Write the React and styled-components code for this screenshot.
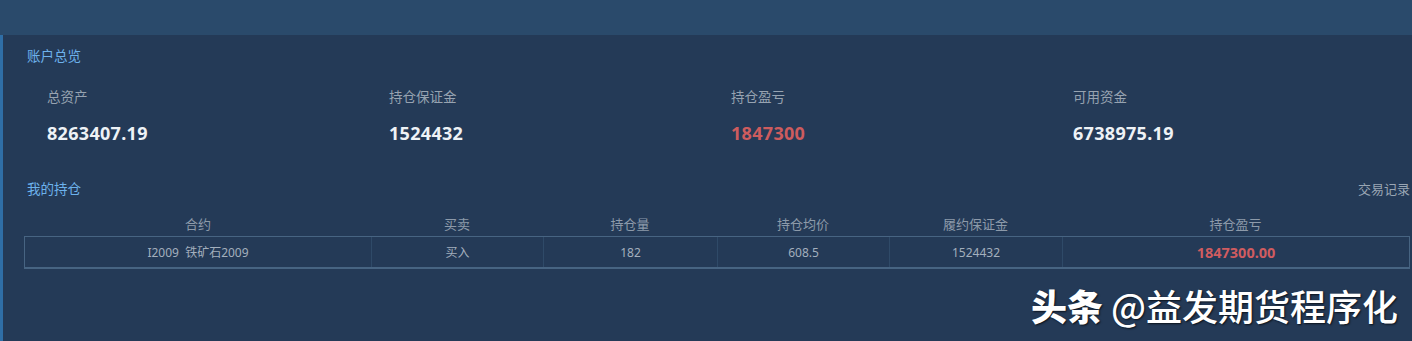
import React from "react";
import styled, { createGlobalStyle } from "styled-components";

const GlobalStyle = createGlobalStyle`
  html, body {
    margin: 0;
    padding: 0;
    background: #243a57;
  }
  body {
    font-family: "Noto Sans", "Noto Sans CJK SC", sans-serif;
  }
`;

const Page = styled.div`
  width: 1412px;
  height: 341px;
  background: #243a57;
  display: flex;
  flex-direction: column;
  position: relative;
  overflow: hidden;
`;

const TopBar = styled.div`
  height: 35px;
  background: #2a4a6b;
  flex-shrink: 0;
`;

const Body = styled.div`
  flex: 1;
  border-left: 3px solid #2f6ea6;
  padding: 10px 2px 0 20px;
  display: flex;
  flex-direction: column;
`;

const SectionHead = styled.div`
  display: flex;
  justify-content: space-between;
  align-items: center;
  height: 20px;
  padding-left: 4px;
`;

const SectionTitle = styled.span`
  font-size: 13.5px;
  color: #6db2ec;
`;

const SideLink = styled.span`
  font-size: 13px;
  color: #9aa6b4;
`;

const StatGrid = styled.div`
  display: grid;
  grid-template-columns: repeat(4, 342px);
  padding: 23px 0 0 24px;
  height: 113px;
  box-sizing: border-box;
`;

const Stat = styled.div`
  display: flex;
  flex-direction: column;
  gap: 15px;
`;

const StatLabel = styled.div`
  font-size: 13.5px;
  color: #97a3b1;
  line-height: 18px;
`;

const StatValue = styled.div`
  font-size: 18px;
  font-weight: 700;
  letter-spacing: 0.3px;
  line-height: 24px;
  color: ${(p) => (p.$loss ? "#cd5c5e" : "#eef2f6")};
`;

const Table = styled.div`
  margin-top: 12px;
  width: 1386px;
  margin-left: 1px;
  font-size: 12px;
`;

const Row = styled.div`
  display: grid;
  grid-template-columns: 346px 172px 174px 172px 173px 1fr;
  height: ${(p) => (p.$head ? "26px" : "33px")};
  border: ${(p) => (p.$head ? "1px solid transparent" : "1px solid #476482")};
  border-bottom-width: ${(p) => (p.$head ? "0" : "2px")};
  box-sizing: border-box;
`;

const Cell = styled.div`
  display: flex;
  align-items: center;
  justify-content: center;
  color: ${(p) => (p.$loss ? "#d05c60" : p.$head ? "#8d9aaa" : "#a3afbd")};
  font-weight: ${(p) => (p.$loss ? 700 : 400)};
  font-size: ${(p) => (p.$loss ? "14.5px" : p.$head ? "13px" : "12px")};
  border-left: ${(p) => (p.$first || p.$head ? "none" : "1px solid #2f4a68")};
  white-space: pre;
`;

const Watermark = styled.div`
  position: absolute;
  right: 14px;
  bottom: 10px;
  font-size: 36px;
  font-weight: 500;
  color: #ffffff;
  font-family: "Noto Sans CJK SC", sans-serif;
  text-shadow: 1px 1px 2px rgba(0, 0, 0, 0.7);
  b {
    font-weight: 900;
  }
`;

const stats = [
  { label: "总资产", value: "8263407.19" },
  { label: "持仓保证金", value: "1524432" },
  { label: "持仓盈亏", value: "1847300", loss: true },
  { label: "可用资金", value: "6738975.19" },
];

const headers = ["合约", "买卖", "持仓量", "持仓均价", "履约保证金", "持仓盈亏"];

const positions = [
  { code: "I2009  铁矿石2009", side: "买入", qty: "182", avg: "608.5", margin: "1524432", pnl: "1847300.00" },
];

export default function App() {
  return (
    <Page>
      <GlobalStyle />
      <TopBar />
      <Body>
        <SectionHead>
          <SectionTitle>账户总览</SectionTitle>
        </SectionHead>
        <StatGrid>
          {stats.map((s) => (
            <Stat key={s.label}>
              <StatLabel>{s.label}</StatLabel>
              <StatValue $loss={s.loss}>{s.value}</StatValue>
            </Stat>
          ))}
        </StatGrid>
        <SectionHead>
          <SectionTitle>我的持仓</SectionTitle>
          <SideLink>交易记录</SideLink>
        </SectionHead>
        <Table>
          <Row $head>
            {headers.map((h) => (
              <Cell key={h} $head>
                {h}
              </Cell>
            ))}
          </Row>
          {positions.map((p) => (
            <Row key={p.code}>
              <Cell $first>{p.code}</Cell>
              <Cell>{p.side}</Cell>
              <Cell>{p.qty}</Cell>
              <Cell>{p.avg}</Cell>
              <Cell>{p.margin}</Cell>
              <Cell $loss>{p.pnl}</Cell>
            </Row>
          ))}
        </Table>
      </Body>
      <Watermark>
        <b>头条</b> @益发期货程序化
      </Watermark>
    </Page>
  );
}
